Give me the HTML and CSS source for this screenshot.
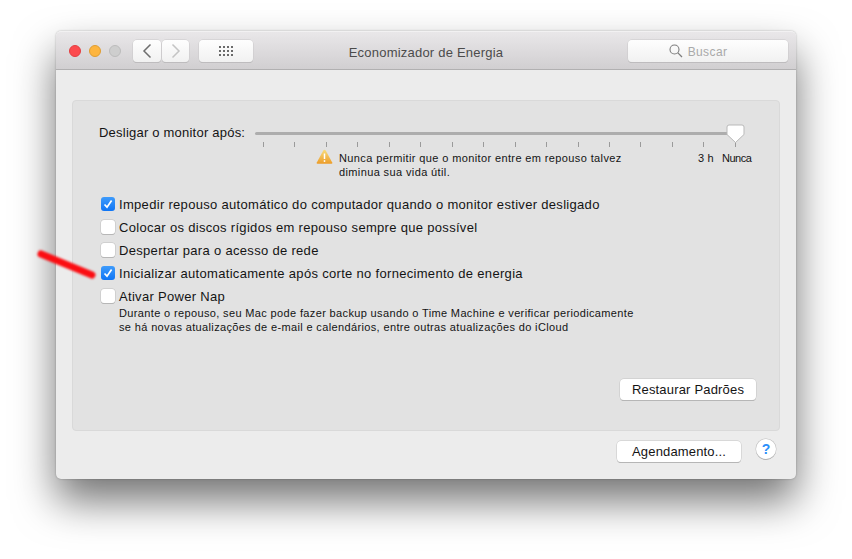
FILE: index.html
```html
<!DOCTYPE html>
<html lang="pt">
<head>
<meta charset="utf-8">
<title>Economizador de Energia</title>
<link rel="stylesheet" href="styles.css">
</head>
<body>
<div class="window">
  <header class="toolbar">
    <div class="lights">
      <span class="light red"></span>
      <span class="light yellow"></span>
      <span class="light gray"></span>
    </div>
    <div class="nav">
      <span class="tool nav-btn"><svg width="12" height="16" viewBox="0 0 12 16"><path d="M9.5 1.5 L3 8 L9.5 14.5" fill="none" stroke="#6e6e6e" stroke-width="1.5"/></svg></span>
      <span class="tool nav-btn"><svg width="12" height="16" viewBox="0 0 12 16"><path d="M2.5 1.5 L9 8 L2.5 14.5" fill="none" stroke="#c4c4c4" stroke-width="1.5"/></svg></span>
    </div>
    <span class="tool grid-btn">
      <svg width="15" height="11" viewBox="0 0 15 11" fill="#6a6a6a">
        <rect x="0" y="0" width="2" height="2"/><rect x="4" y="0" width="2" height="2"/><rect x="8" y="0" width="2" height="2"/><rect x="12" y="0" width="2" height="2"/>
        <rect x="0" y="4" width="2" height="2"/><rect x="4" y="4" width="2" height="2"/><rect x="8" y="4" width="2" height="2"/><rect x="12" y="4" width="2" height="2"/>
        <rect x="0" y="8" width="2" height="2"/><rect x="4" y="8" width="2" height="2"/><rect x="8" y="8" width="2" height="2"/><rect x="12" y="8" width="2" height="2"/>
      </svg>
    </span>
    <div class="title">Economizador de Energia</div>
    <div class="tool search">
      <svg width="14" height="14" viewBox="0 0 14 14"><circle cx="5.5" cy="5.5" r="4.5" fill="none" stroke="#7d7d7d" stroke-width="1.1"/><path d="M8.9 8.9 L13 13" stroke="#7d7d7d" stroke-width="1.3"/></svg>
      <span>Buscar</span>
    </div>
  </header>

  <main class="content">
    <section class="panel">
      <div class="slider-row">
        <span class="slider-label">Desligar o monitor após:</span>
        <div class="slider">
          <div class="track"></div>
          <div class="ticks">
            <i></i><i></i><i></i><i></i><i></i><i></i><i></i><i></i>
            <i></i><i></i><i></i><i></i><i></i><i></i><i></i><i></i>
          </div>
          <svg class="thumb" width="19" height="20" viewBox="0 0 19 20"><path d="M3 1 H16 Q18 1 18 3 V10.5 L9.5 18.5 L1 10.5 V3 Q1 1 3 1 Z" fill="#fff" stroke="#b9b9b9" stroke-width="1"/></svg>
        </div>
      </div>

      <div class="note-row">
        <svg class="warn" width="17" height="16" viewBox="0 0 17 16">
          <defs><linearGradient id="wg" x1="0" y1="0" x2="0" y2="1"><stop offset="0" stop-color="#f8dc7c"/><stop offset="1" stop-color="#ec9c28"/></linearGradient></defs>
          <path d="M8.5 0.8 Q9.2 0.8 9.7 1.6 L16.2 13.4 Q16.8 14.8 15.4 14.8 H1.6 Q0.2 14.8 0.8 13.4 L7.3 1.6 Q7.8 0.8 8.5 0.8 Z" fill="url(#wg)"/>
          <path d="M8.5 4.5 V10" stroke="#fff" stroke-width="1.5"/><rect x="7.75" y="11.2" width="1.5" height="1.7" fill="#fff"/>
        </svg>
        <p class="note">Nunca permitir que o monitor entre em repouso talvez<br>diminua sua vida útil.</p>
        <span class="scale-a">3 h</span>
        <span class="scale-b">Nunca</span>
      </div>

      <ul class="options">
        <li class="option"><span class="box checked"><svg width="10" height="10" viewBox="0 0 10 10"><path d="M1.5 5.5 L4 8.2 L8.6 1.4" fill="none" stroke="#fff" stroke-width="1.7"/></svg></span>Impedir repouso automático do computador quando o monitor estiver desligado</li>
        <li class="option"><span class="box"></span>Colocar os discos rígidos em repouso sempre que possível</li>
        <li class="option"><span class="box"></span>Despertar para o acesso de rede</li>
        <li class="option"><span class="box checked"><svg width="10" height="10" viewBox="0 0 10 10"><path d="M1.5 5.5 L4 8.2 L8.6 1.4" fill="none" stroke="#fff" stroke-width="1.7"/></svg></span>Inicializar automaticamente após corte no fornecimento de energia</li>
        <li class="option"><span class="box"></span>Ativar Power Nap</li>
      </ul>
      <p class="nap-text">Durante o repouso, seu Mac pode fazer backup usando o Time Machine e verificar periodicamente<br>se há novas atualizações de e-mail e calendários, entre outras atualizações do iCloud</p>

      <div class="panel-actions">
        <span class="btn restore">Restaurar Padrões</span>
      </div>
    </section>
    <footer class="footer">
      <span class="btn schedule">Agendamento...</span>
      <span class="help">?</span>
    </footer>
  </main>
</div>
<svg class="annotation" width="60" height="30" viewBox="0 0 60 30"><path d="M4 4 L55 25" stroke="#fb0d12" stroke-width="7" stroke-linecap="round"/></svg>
</body>
</html>
```

FILE: styles.css
```css
* { box-sizing: border-box; }
html, body { margin: 0; padding: 0; }
body {
  width: 852px;
  height: 559px;
  overflow: hidden;
  position: relative;
  background: #fff;
  font-family: "Liberation Sans", Arial, sans-serif;
  font-size: 13px;
  color: #141414;
  padding: 31px 0 0 56px;
}
.window {
  width: 740px;
  height: 448px;
  border-radius: 5px;
  background: #ececec;
  box-shadow: 0 22px 42px rgba(0,0,0,.55), 0 0 2px rgba(0,0,0,.3);
  display: flex;
  flex-direction: column;
}
.toolbar {
  height: 39px;
  flex: none;
  display: flex;
  align-items: center;
  padding: 1px 8px 0 13px;
  background: linear-gradient(#e9e7e9, #d1cfd1);
  border-bottom: 1px solid #b1b0b1;
  border-top: 1px solid #f2f1f2;
  border-radius: 5px 5px 0 0;
}
.lights { display: flex; gap: 8px; width: 64px; flex: none; }
.light { width: 12px; height: 12px; border-radius: 50%; }
.red { background: #fc4a4e; border: 1px solid #e33e41; }
.yellow { background: #fdb53f; border: 1px solid #df9d32; }
.gray { background: #cecece; border: 1px solid #bcbcbc; }
.tool {
  height: 22px;
  background: linear-gradient(#fefefe, #f1f1f1);
  border-radius: 4px;
  box-shadow: 0 0 0 .5px #c9c8c9, 0 1px 0 #b2b1b2;
  display: flex;
  align-items: center;
  justify-content: center;
}
.nav { display: flex; gap: 1px; flex: none; }
.nav-btn { width: 28px; }
.nav-btn:last-child { width: 27px; }
.grid-btn { width: 54px; margin-left: 10px; flex: none; }
.grid-btn svg { margin-top: 1px; }
.title {
  flex: 1;
  text-align: center;
  color: #4b4b4b;
  font-size: 13px;
  letter-spacing: .22px;
  margin-right: 29px;
  padding-top: 2px;
}
.search {
  width: 160px;
  flex: none;
  gap: 5px;
  color: #a9a9a9;
  font-size: 12px;
  letter-spacing: .4px;
  padding-right: 20px;
}
.search span { padding-top: 1px; }
.content {
  flex: 1;
  display: flex;
  flex-direction: column;
  padding: 30px 16px 0;
}
.panel {
  width: 708px;
  height: 331px;
  flex: none;
  background: #e2e2e2;
  border: 1px solid #d9d9d9;
  border-radius: 4px;
  padding: 24px 0 0 26px;
  display: flex;
  flex-direction: column;
}
.slider-row { display: flex; align-items: flex-start; }
.slider-label { letter-spacing: .22px; width: 156px; flex: none; line-height: 16px; }
.slider { position: relative; width: 481px; padding-top: 7px; }
.track { height: 3px; background: #adadad; border-radius: 2px; }
.ticks {
  display: flex;
  justify-content: space-between;
  width: 473px;
  margin: 7px 0 0 8px;
}
.ticks i { width: 1px; height: 5px; background: #9a9a9a; display: block; }
.thumb { position: absolute; left: 471px; top: -1px; }
.note-row {
  display: flex;
  align-items: flex-start;
  font-size: 11px;
  margin: 4px 0 0 217px;
  letter-spacing: .38px;
  color: #141414;
}
.warn { flex: none; margin: -2px 6px 0 0; }
.note { margin: 0; width: 359px; line-height: 14px; flex: none; }
.scale-a { line-height: 14px; width: 24px; flex: none; letter-spacing: .2px; }
.scale-b { line-height: 14px; flex: none; letter-spacing: -.5px; }
.options { list-style: none; margin: 14px 0 0 2px; padding: 0; }
.option {
  display: flex;
  align-items: center;
  height: 23px;
  letter-spacing: .31px;
}
.box {
  width: 14px;
  height: 14px;
  flex: none;
  margin: -2px 4px 0 0;
  border-radius: 3px;
  background: #fff;
  box-shadow: 0 0 0 .5px #bdbdbd, 0 1px 0 #b0b0b0;
  display: flex;
  align-items: center;
  justify-content: center;
}
.checked { background: linear-gradient(#3e9bfb, #0f75f5); box-shadow: none; }
.nap-text {
  margin: -2px 0 0 20px;
  font-size: 11px;
  line-height: 14px;
  letter-spacing: .36px;
  color: #141414;
}
.panel-actions { display: flex; justify-content: flex-end; margin-top: 45px; padding-right: 23px; }
.btn {
  display: flex;
  align-items: center;
  justify-content: center;
  height: 21px;
  background: #fff;
  border-radius: 4px;
  box-shadow: 0 0 0 .5px #c4c4c4, 0 1px 0 #a8a8a8;
  letter-spacing: .18px;
}
.restore { width: 136px; }
.footer { display: flex; align-items: flex-start; justify-content: flex-end; margin-top: 10px; padding-right: 4px; gap: 15px; }
.schedule { width: 124px; letter-spacing: .15px; }
.help {
  width: 20px;
  height: 20px;
  margin-top: -2px;
  border-radius: 50%;
  background: #fff;
  box-shadow: 0 0 0 .5px #bcbcbc, 0 1px 0 #aaa;
  color: #2b8ffa;
  font-weight: bold;
  font-size: 14px;
  display: flex;
  align-items: center;
  justify-content: center;
}
.annotation { position: absolute; left: 37px; top: 250px; filter: blur(.8px); }
```
